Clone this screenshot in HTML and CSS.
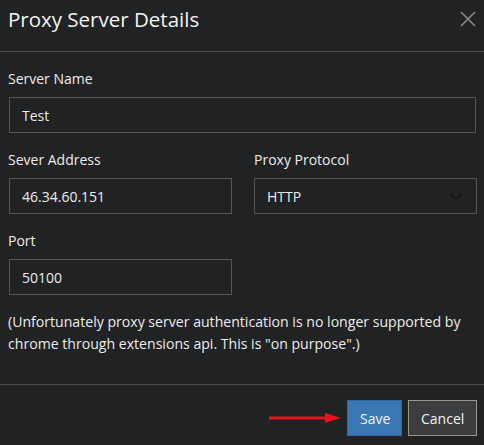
FILE: index.html
```html
<!DOCTYPE html>
<html lang="en">
<head>
    <meta charset="UTF-8">
    <title>Proxy Server Details</title>
    <link rel="stylesheet" href="styles.css">
</head>
<body>
    <div class="modal">
        <header class="modal-header">
            <h2>Proxy Server Details</h2>
            <button class="close-btn" aria-label="Close">
                <svg width="16" height="16" viewBox="0 0 16 16"><path d="M1 1L15 15M15 1L1 15" stroke="#8a8a8a" stroke-width="1.6" fill="none"/></svg>
            </button>
        </header>

        <div class="modal-body">
            <div class="field">
                <label>Server Name</label>
                <input type="text" class="input" value="Test">
            </div>

            <div class="row">
                <div class="field">
                    <label>Sever Address</label>
                    <input type="text" class="input" value="46.34.60.151">
                </div>
                <div class="field">
                    <label>Proxy Protocol</label>
                    <div class="select">
                        <span>HTTP</span>
                        <svg width="12" height="7" viewBox="0 0 12 7"><path d="M1 1L6 6L11 1" stroke="#111" stroke-width="1.4" fill="none"/></svg>
                    </div>
                </div>
            </div>

            <div class="row">
                <div class="field">
                    <label>Port</label>
                    <input type="text" class="input" value="50100">
                </div>
            </div>

            <p class="note">(Unfortunately proxy server authentication is no longer supported by chrome through extensions api. This is "on purpose".)</p>
        </div>

        <footer class="modal-footer">
            <svg class="arrow" width="72" height="10" viewBox="0 0 72 10"><path d="M0 5H58" stroke="#e8141c" stroke-width="3"/><path d="M56 0L72 5L56 10Z" fill="#e8141c"/></svg>
            <button class="btn btn-save">Save</button>
            <button class="btn btn-cancel">Cancel</button>
        </footer>
    </div>
</body>
</html>
```

FILE: styles.css
```css
* {
    margin: 0;
    padding: 0;
    box-sizing: border-box;
}

body {
    font-family: 'Open Sans', 'Noto Sans', sans-serif;
    background: #212223;
    color: #ececec;
    font-size: 14px;
}

.modal {
    width: 484px;
    height: 445px;
}

.modal-header {
    display: flex;
    justify-content: space-between;
    align-items: center;
    height: 52px;
    padding: 0 8px 14px 8px;
    border-bottom: 1px solid #4a4b4c;
}

.modal-header h2 {
    font-size: 20.5px;
    font-weight: normal;
    color: #f2f2f2;
}

.close-btn {
    background: none;
    border: none;
    width: 16px;
    height: 16px;
    cursor: pointer;
}

.modal-body {
    padding: 17px 8px 0 8px;
}

.field {
    display: flex;
    flex-direction: column;
    margin-bottom: 17px;
}

.field label {
    height: 20px;
    line-height: 20px;
    margin-bottom: 8px;
    font-size: 14px;
}

.row {
    display: grid;
    grid-template-columns: 224px 223px;
    gap: 22px;
}

.input,
.select {
    height: 36px;
    margin-left: 1px;
    border: 1px solid #555657;
    background: #212223;
    color: #ececec;
    font-family: inherit;
    font-size: 14px;
    padding: 0 12px;
}

.select {
    display: flex;
    justify-content: space-between;
    align-items: center;
    margin-left: 0;
    padding-right: 14px;
}

.note {
    margin-top: -1px;
    line-height: 22px;
    font-size: 14.1px;
}

.modal-footer {
    display: flex;
    justify-content: flex-end;
    align-items: center;
    gap: 5px;
    margin-top: 29px;
    border-top: 1px solid #4a4b4c;
    padding: 15px 7px 0 0;
}

.arrow {
    margin-right: 1px;
}

.btn {
    height: 36px;
    font-family: inherit;
    font-size: 14px;
    color: #f2f2f2;
    padding: 0 12px;
    cursor: pointer;
}

.btn-save {
    background: #3a77b5;
    border: 1px solid #2f66a0;
    width: 55px;
    margin-right: 1px;
}

.btn-cancel {
    background: #3a3c3d;
    border: 1px solid #9b968c;
    width: 69px;
}
```
